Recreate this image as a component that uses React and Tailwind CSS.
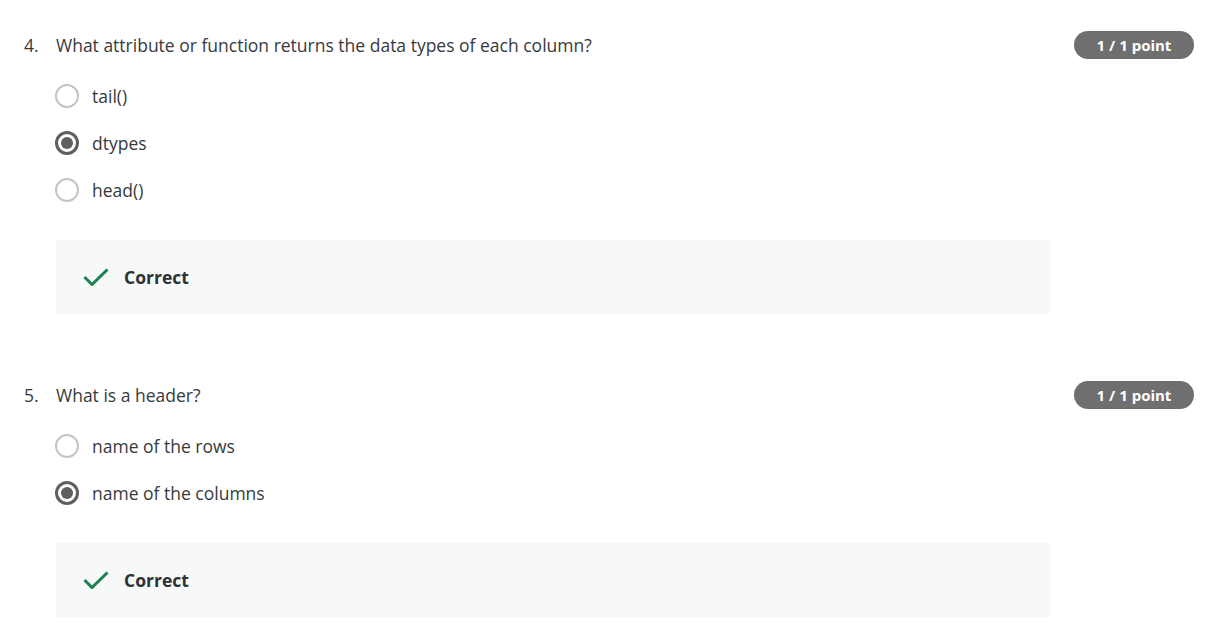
import React from 'react';

const questions = [
  {
    num: '4.',
    text: 'What attribute or function returns the data types of each column?',
    options: ['tail()', 'dtypes', 'head()'],
    selected: 1,
  },
  {
    num: '5.',
    text: 'What is a header?',
    options: ['name of the rows', 'name of the columns'],
    selected: 1,
  },
];

const Radio = ({ checked }) =>
  checked ? (
    <span className="flex h-[24px] w-[24px] shrink-0 items-center justify-center rounded-full border-[3px] border-[#5f5f5f]">
      <span className="h-[12px] w-[12px] rounded-full bg-[#5f5f5f]" />
    </span>
  ) : (
    <span className="h-[24px] w-[24px] shrink-0 rounded-full border-2 border-[#c4c4c4]" />
  );

const Question = ({ q }) => (
  <section>
    <div className="flex h-[28px] items-center justify-between">
      <div className="flex items-center text-[17.5px] text-[#373a3c]">
        <span className="w-[32px]">{q.num}</span>
        <span>{q.text}</span>
      </div>
      <span className="flex h-[28px] w-[120px] items-center justify-center rounded-full bg-[#6f6f6f] text-[15px] font-bold text-white">
        1 / 1 point
      </span>
    </div>

    <div className="mt-[25px] ml-[31px] flex flex-col gap-[23px]">
      {q.options.map((opt, i) => (
        <label key={opt} className="flex h-[24px] items-center gap-[13px] text-[17.5px] text-[#373a3c]">
          <Radio checked={i === q.selected} />
          <span>{opt}</span>
        </label>
      ))}
    </div>

    {/* feedback */}
    <div className="mt-[38px] ml-[32px] mr-[144px] flex h-[74px] items-center bg-[#f6f9f8] pl-[27px]">
      <svg width="26" height="18" viewBox="0 0 26 18" fill="none">
        <polyline points="1.5,9 9,16.5 24.5,1.5" stroke="#1c8050" strokeWidth="3" />
      </svg>
      <span className="ml-[15px] text-[17.5px] font-bold text-[#2f3234]">Correct</span>
    </div>
  </section>
);

export default function App() {
  return (
    <div
      className="min-h-screen bg-white pt-[31px] pl-[24px] pr-[35px]"
      style={{ fontFamily: '"Open Sans", sans-serif' }}
    >
      <div className="flex flex-col gap-[67px]">
        {questions.map((q) => (
          <Question key={q.num} q={q} />
        ))}
      </div>
    </div>
  );
}
